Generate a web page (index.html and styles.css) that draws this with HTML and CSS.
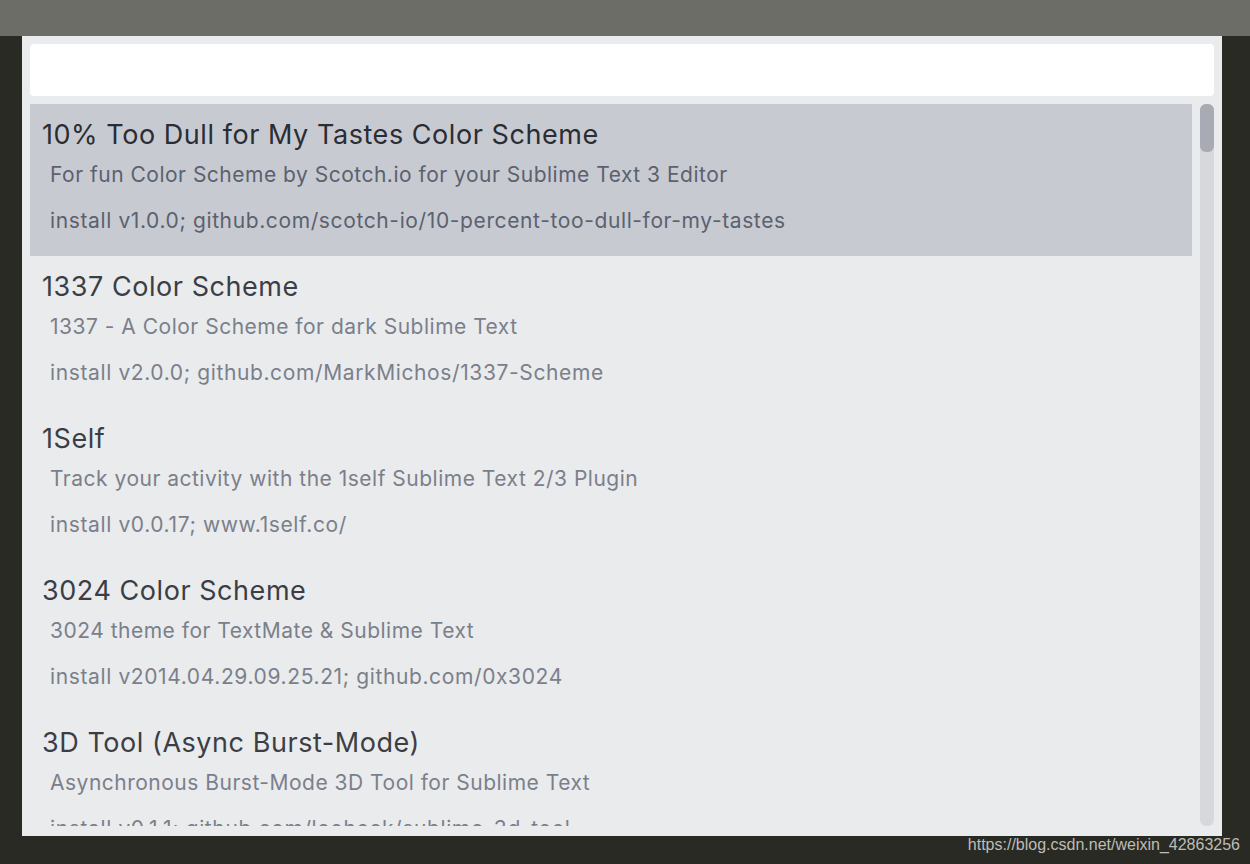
FILE: index.html
```html
<!DOCTYPE html>
<html>
<head>
<meta charset="utf-8">
<link rel="stylesheet" href="styles.css">
</head>
<body>
<div class="topbar"></div>
<div class="stage">
  <div class="panel">
    <div class="search"></div>
    <div class="listwrap">
      <div class="list">
        <div class="item selected">
          <div class="title">10% Too Dull for My Tastes Color Scheme</div>
          <div class="desc">For fun Color Scheme by Scotch.io for your Sublime Text 3 Editor</div>
          <div class="desc install">install v1.0.0; github.com/scotch-io/10-percent-too-dull-for-my-tastes</div>
        </div>
        <div class="item">
          <div class="title">1337 Color Scheme</div>
          <div class="desc">1337 - A Color Scheme for dark Sublime Text</div>
          <div class="desc install">install v2.0.0; github.com/MarkMichos/1337-Scheme</div>
        </div>
        <div class="item">
          <div class="title">1Self</div>
          <div class="desc">Track your activity with the 1self Sublime Text 2/3 Plugin</div>
          <div class="desc install">install v0.0.17; www.1self.co/</div>
        </div>
        <div class="item">
          <div class="title">3024 Color Scheme</div>
          <div class="desc">3024 theme for TextMate &amp; Sublime Text</div>
          <div class="desc install">install v2014.04.29.09.25.21; github.com/0x3024</div>
        </div>
        <div class="item">
          <div class="title">3D Tool (Async Burst-Mode)</div>
          <div class="desc">Asynchronous Burst-Mode 3D Tool for Sublime Text</div>
          <div class="desc install">install v0.1.1; github.com/leoheck/sublime-3d-tool</div>
        </div>
      </div>
      <div class="scrollbar"><div class="thumb"></div></div>
    </div>
  </div>
  <div class="watermark">https://blog.csdn.net/weixin_42863256</div>
</div>
</body>
</html>
```
FILE: styles.css
```css
html, body {
  margin: 0;
  padding: 0;
  width: 1250px;
  height: 864px;
  overflow: hidden;
  background: #2a2a24;
  font-family: Inter, "Noto Sans", sans-serif;
}
.topbar {
  height: 36px;
  background: #6d6d68;
}
.stage {
  position: relative;
  height: 828px;
  padding-left: 22px;
}
.panel {
  width: 1200px;
  height: 800px;
  background: #eaebed;
  box-sizing: border-box;
  padding: 8px;
  display: flex;
  flex-direction: column;
  gap: 8px;
}
.search {
  height: 52px;
  background: #ffffff;
  border-radius: 4px;
  flex: none;
}
.listwrap {
  flex: 1;
  display: flex;
  gap: 8px;
  overflow: hidden;
  min-height: 0;
}
.list {
  flex: 1;
  overflow: hidden;
  height: 722px;
}
.item {
  height: 152px;
  box-sizing: border-box;
  padding: 13px 0 0 12px;
}
.item.selected {
  background: #c8cad2;
}
.title {
  font-size: 27px;
  line-height: 36px;
  color: #3b3e45;
  letter-spacing: 0.55px;
}
.selected .title {
  color: #2a2d33;
}
.desc {
  font-size: 21px;
  line-height: 32px;
  color: #7a808b;
  padding-left: 8px;
  letter-spacing: 0.5px;
  margin-top: 6px;
}
.desc.install {
  margin-top: 14px;
  letter-spacing: 0.62px;
}
.selected .desc {
  color: #5b616e;
}
.scrollbar {
  width: 14px;
  height: 722px;
  background: #d7d8dc;
  border-radius: 6px;
  flex: none;
}
.thumb {
  height: 48px;
  background: #a9abb4;
  border-radius: 6px;
}
.watermark {
  position: absolute;
  right: 10px;
  bottom: 10px;
  font-family: "Liberation Sans", Arial, sans-serif;
  font-size: 16px;
  color: #bdbdb5;
}
```
